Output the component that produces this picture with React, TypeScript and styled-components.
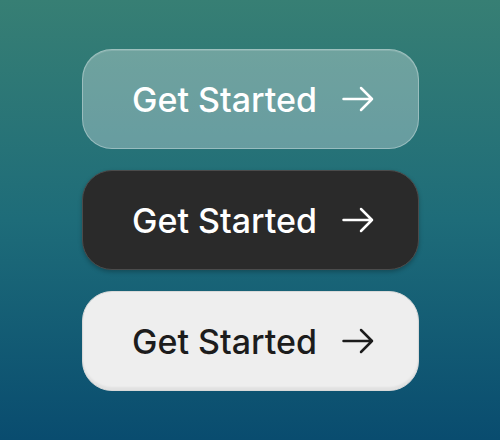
import { createGlobalStyle, styled } from "styled-components";

type Variant = "glass" | "dark" | "light";

const GlobalStyle = createGlobalStyle`
  html, body {
    margin: 0;
    padding: 0;
  }
  #root {
    width: 500px;
    height: 440px;
  }
`;

const variants = {
  glass: {
    bg: "rgba(255, 255, 255, 0.3)",
    border: "rgba(255, 255, 255, 0.32)",
    color: "#ffffff",
    shadow: "inset 0 1px 0 rgba(255, 255, 255, 0.15)",
  },
  dark: {
    bg: "#2a2a2a",
    border: "#4b4b4b",
    color: "#ffffff",
    shadow: "0 2px 4px rgba(0, 0, 0, 0.25)",
  },
  light: {
    bg: "#eeeeee",
    border: "#d9d9d9",
    color: "#1c1c1c",
    shadow: "inset 0 -3px 2px rgba(0, 0, 0, 0.05)",
  },
};

function ArrowIcon() {
  return (
    <svg width="32" height="26" viewBox="0 0 32 26" fill="none">
      <path
        d="M1.5 13H30M19 2L30 13L19 24"
        stroke="currentColor"
        strokeWidth="2.5"
        strokeLinecap="round"
        strokeLinejoin="round"
      />
    </svg>
  );
}

function App() {
  const list: Variant[] = ["glass", "dark", "light"];
  return (
    <>
      <GlobalStyle />
      <Page>
        {list.map((v) => (
          <StartButton key={v} $variant={v}>
            <Label>Get Started</Label>
            <ArrowIcon />
          </StartButton>
        ))}
      </Page>
    </>
  );
}

export default App;

const Page = styled.div`
  display: flex;
  flex-direction: column;
  align-items: center;
  justify-content: center;
  gap: 21px;
  width: 100%;
  height: 100%;
  background: linear-gradient(180deg, #377f74 0%, #1e6c79 50%, #094c6f 100%);
`;

const StartButton = styled.button<{ $variant: Variant }>`
  display: flex;
  align-items: center;
  justify-content: center;
  gap: 25px;
  box-sizing: border-box;
  width: 337px;
  height: 100px;
  padding: 0 0 0 6px;
  border-radius: 30px;
  border: 1.5px solid ${(p) => variants[p.$variant].border};
  background: ${(p) => variants[p.$variant].bg};
  color: ${(p) => variants[p.$variant].color};
  box-shadow: ${(p) => variants[p.$variant].shadow};
  cursor: pointer;
`;

const Label = styled.span`
  font-family: Inter, "Noto Sans", sans-serif;
  font-size: 34px;
  font-weight: 500;
  letter-spacing: 0;
`;
